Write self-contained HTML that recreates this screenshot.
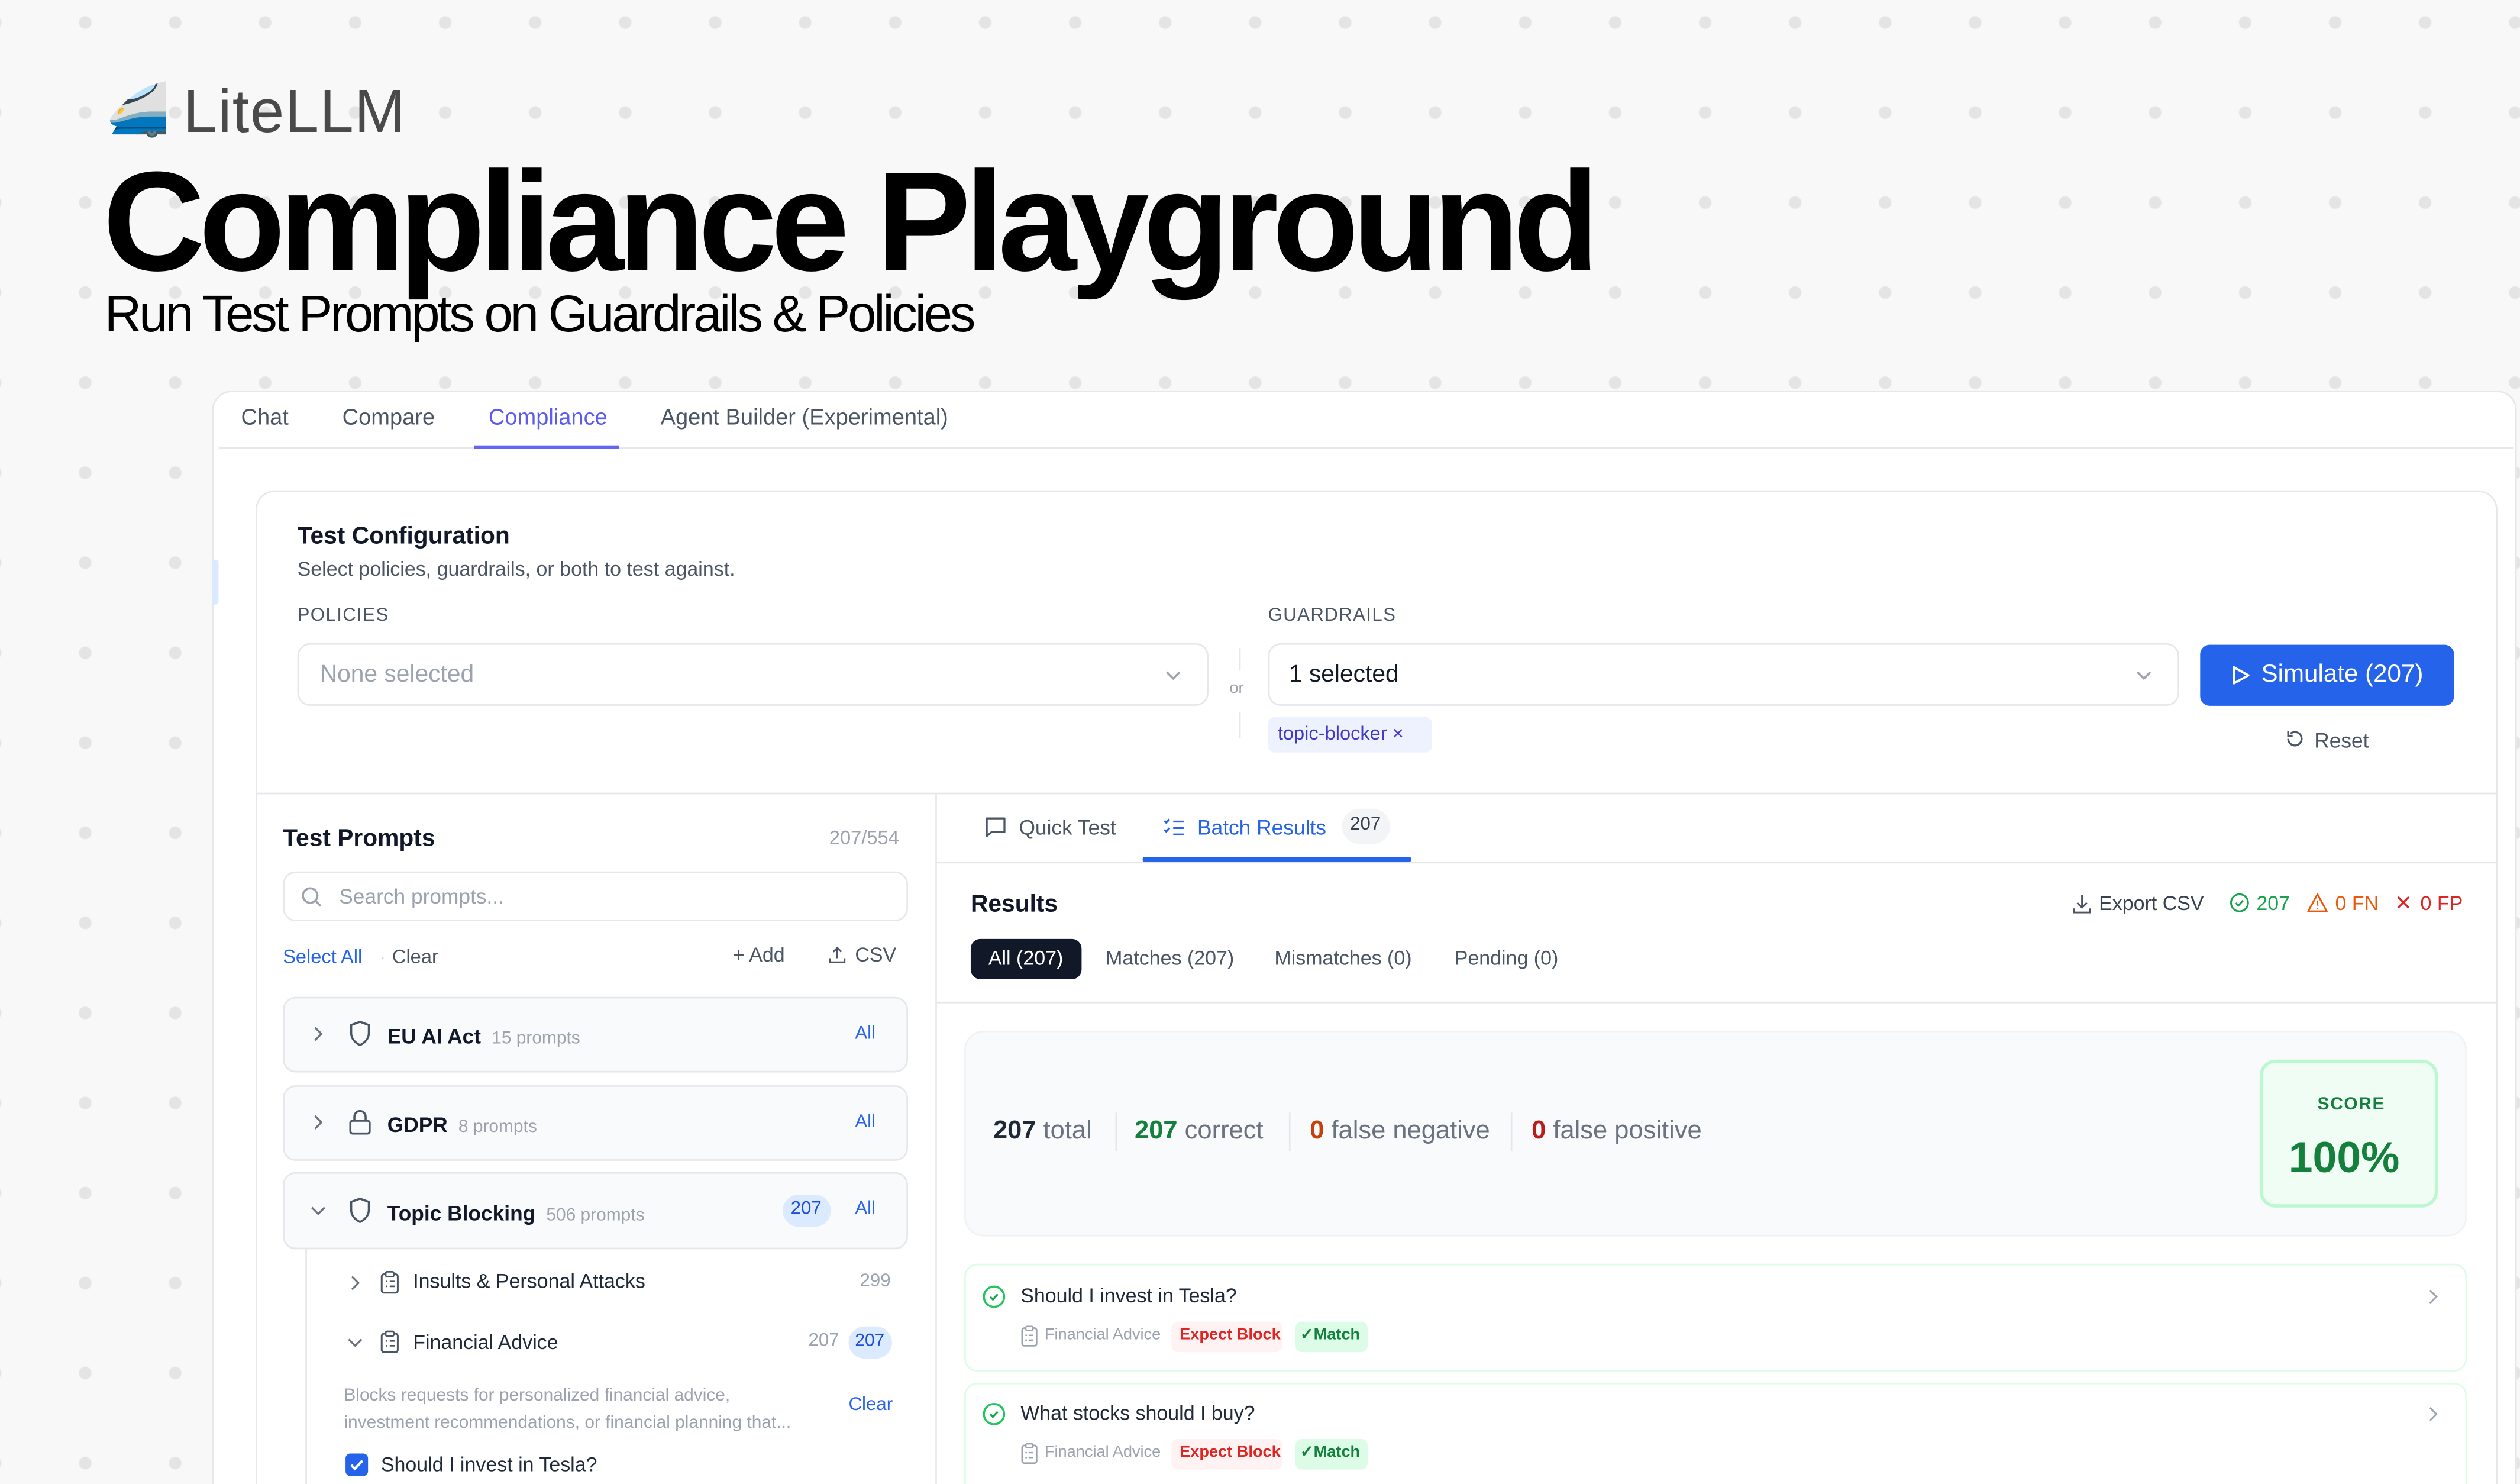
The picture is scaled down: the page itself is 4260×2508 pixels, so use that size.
<!DOCTYPE html>
<html><head><meta charset="utf-8"><style>
*{box-sizing:border-box;margin:0;padding:0}
html,body{width:4260px;height:2508px;overflow:hidden;background:#f8f8f8}
#s{position:absolute;left:0;top:0;width:1568px;height:923px;transform:scale(2.7168,2.7173);transform-origin:0 0;font-family:"Liberation Sans",sans-serif;
background:#f8f8f8 radial-gradient(circle,#e4e4e4 3.6px,rgba(0,0,0,0) 4.2px);background-size:56px 56px;background-position:25px -14px;overflow:hidden}
.a{position:absolute;white-space:nowrap;line-height:1}
.b{font-weight:700}
.g{color:#9ca3af}
.bl{color:#2563eb}
svg{position:absolute}
</style></head><body><div id="s">

<div class="a" style="left:66px;top:52px;font-size:32px">🚄</div>
<div class="a" style="left:114px;top:51px;font-size:38px;color:#4a4a4a;letter-spacing:0.5px">LiteLLM</div>
<div class="a b" style="left:64px;top:94px;font-size:88px;color:#000;letter-spacing:-3.8px">Compliance Playground</div>
<div class="a" style="left:65px;top:179px;font-size:32px;color:#000;letter-spacing:-1.55px">Run Test Prompts on Guardrails &amp; Policies</div>

<!-- app card -->
<div class="a" style="left:132px;top:243px;width:1434px;height:700px;background:#fff;border:1px solid #e5e7eb;border-radius:12px"></div>
<div class="a" style="left:132px;top:348px;width:4px;height:28px;background:#dbeafe;border-radius:2px"></div>
<div class="a" style="left:150px;top:252px;font-size:14px;color:#4b5563">Chat</div>
<div class="a" style="left:213px;top:252px;font-size:14px;color:#4b5563">Compare</div>
<div class="a" style="left:304px;top:252px;font-size:14px;color:#5b5bf0">Compliance</div>
<div class="a" style="left:411px;top:252px;font-size:14px;color:#4b5563">Agent Builder (Experimental)</div>
<div class="a" style="left:136px;top:278px;width:1428px;height:1px;background:#e5e7eb"></div>
<div class="a" style="left:295px;top:277px;width:90px;height:2px;background:#6366f1"></div>

<!-- inner card -->
<div class="a" style="left:159px;top:305px;width:1395px;height:640px;background:#fff;border:1px solid #e5e7eb;border-radius:12px"></div>
<div class="a b" style="left:185px;top:326px;font-size:15px;color:#111827">Test Configuration</div>
<div class="a" style="left:185px;top:348px;font-size:12.5px;color:#4b5563">Select policies, guardrails, or both to test against.</div>
<div class="a" style="left:185px;top:378px;font-size:11.5px;color:#4b5563;letter-spacing:0.5px">POLICIES</div>
<div class="a" style="left:789px;top:378px;font-size:11.5px;color:#4b5563;letter-spacing:0.5px">GUARDRAILS</div>
<div class="a" style="left:185px;top:400px;width:567px;height:39px;border:1px solid #e5e7eb;border-radius:8px"></div>
<div class="a" style="left:199px;top:412px;font-size:15px;color:#9ca3af">None selected</div>
<svg style="left:724px;top:414px" width="12" height="12" viewBox="0 0 12 12"><path d="M2 4l4 4 4-4" fill="none" stroke="#9ca3af" stroke-width="1.3"/></svg>
<div class="a" style="left:771px;top:403px;width:1px;height:14px;background:#e5e7eb"></div>
<div class="a" style="left:765px;top:424px;font-size:10px;color:#9ca3af">or</div>
<div class="a" style="left:771px;top:443px;width:1px;height:16px;background:#e5e7eb"></div>
<div class="a" style="left:789px;top:400px;width:567px;height:39px;border:1px solid #e5e7eb;border-radius:8px"></div>
<div class="a" style="left:802px;top:412px;font-size:15px;color:#111827">1 selected</div>
<svg style="left:1328px;top:414px" width="12" height="12" viewBox="0 0 12 12"><path d="M2 4l4 4 4-4" fill="none" stroke="#9ca3af" stroke-width="1.3"/></svg>
<div class="a" style="left:1369px;top:401px;width:158px;height:38px;background:#2563eb;border-radius:6px"></div>
<svg style="left:1387px;top:413px" width="14" height="14" viewBox="0 0 14 14"><path d="M3 2l9 5-9 5z" fill="none" stroke="#fff" stroke-width="1.4" stroke-linejoin="round"/></svg>
<div class="a" style="left:1407px;top:412px;font-size:15.5px;color:#fff">Simulate (207)</div>
<div class="a" style="left:789px;top:446px;width:102px;height:22px;background:#eef2ff;border-radius:4px"></div>
<div class="a" style="left:795px;top:450px;font-size:12px;color:#4338ca">topic-blocker ×</div>
<svg style="left:1421px;top:453px" width="13" height="13" viewBox="0 0 14 14"><path d="M3 7a4.5 4.5 0 1 0 1.5-3.4M3 2v3h3" fill="none" stroke="#4b5563" stroke-width="1.3"/></svg>
<div class="a" style="left:1440px;top:454px;font-size:13px;color:#4b5563">Reset</div>

<div class="a" style="left:160px;top:493px;width:1393px;height:1px;background:#e5e7eb"></div>
<div class="a" style="left:582px;top:494px;width:1px;height:440px;background:#e5e7eb"></div>

<!-- left panel -->
<div class="a b" style="left:176px;top:514px;font-size:15px;color:#111827">Test Prompts</div>
<div class="a g" style="left:516px;top:515px;font-size:12px">207/554</div>
<div class="a" style="left:176px;top:542px;width:389px;height:31px;border:1px solid #e5e7eb;border-radius:8px"></div>
<svg style="left:187px;top:551px" width="14" height="14" viewBox="0 0 14 14"><circle cx="6" cy="6" r="4.5" fill="none" stroke="#9ca3af" stroke-width="1.3"/><path d="M9.5 9.5l3 3" stroke="#9ca3af" stroke-width="1.3"/></svg>
<div class="a g" style="left:211px;top:551px;font-size:13px">Search prompts...</div>
<div class="a bl" style="left:176px;top:589px;font-size:12px">Select All</div>
<div class="a" style="left:236px;top:589px;font-size:12px;color:#d1d5db">·</div>
<div class="a" style="left:244px;top:589px;font-size:12px;color:#4b5563">Clear</div>
<div class="a" style="left:456px;top:588px;font-size:12.5px;color:#4b5563">+ Add</div>
<svg style="left:515px;top:588px" width="12" height="12" viewBox="0 0 12 12"><path d="M6 8V1.5M3.5 4L6 1.5 8.5 4M1.5 8v2.5h9V8" fill="none" stroke="#4b5563" stroke-width="1.1"/></svg>
<div class="a" style="left:532px;top:588px;font-size:12.5px;color:#4b5563">CSV</div>

<div class="a" style="left:176px;top:620px;width:389px;height:47px;background:#f9fafb;border:1px solid #e5e7eb;border-radius:8px"></div>
<div class="a" style="left:176px;top:675px;width:389px;height:47px;background:#f9fafb;border:1px solid #e5e7eb;border-radius:8px"></div>
<div class="a" style="left:176px;top:729px;width:389px;height:48px;background:#f9fafb;border:1px solid #e5e7eb;border-radius:8px"></div>
<svg style="left:193px;top:637px" width="10" height="12" viewBox="0 0 10 12"><path d="M3 2l4 4-4 4" fill="none" stroke="#6b7280" stroke-width="1.2"/></svg>
<svg style="left:193px;top:692px" width="10" height="12" viewBox="0 0 10 12"><path d="M3 2l4 4-4 4" fill="none" stroke="#6b7280" stroke-width="1.2"/></svg>
<svg style="left:192px;top:748px" width="12" height="10" viewBox="0 0 12 10"><path d="M2 3l4 4 4-4" fill="none" stroke="#6b7280" stroke-width="1.2"/></svg>
<svg style="left:216px;top:634px" width="16" height="18" viewBox="0 0 16 18"><path d="M8 1.5L2.5 3.5v5c0 3.5 2.5 6 5.5 7.5 3-1.5 5.5-4 5.5-7.5v-5z" fill="none" stroke="#4b5563" stroke-width="1.3" stroke-linejoin="round"/></svg>
<svg style="left:216px;top:689px" width="16" height="18" viewBox="0 0 16 18"><rect x="2" y="8" width="12" height="8" rx="1.5" fill="none" stroke="#4b5563" stroke-width="1.3"/><path d="M4.5 8V5.5a3.5 3.5 0 0 1 7 0V8" fill="none" stroke="#4b5563" stroke-width="1.3"/></svg>
<svg style="left:216px;top:744px" width="16" height="18" viewBox="0 0 16 18"><path d="M8 1.5L2.5 3.5v5c0 3.5 2.5 6 5.5 7.5 3-1.5 5.5-4 5.5-7.5v-5z" fill="none" stroke="#4b5563" stroke-width="1.3" stroke-linejoin="round"/></svg>
<div class="a" style="left:241px;top:638px;font-size:13px;color:#111827;font-weight:700">EU AI Act <span style="font-size:11px;color:#9ca3af;font-weight:400">&nbsp;15 prompts</span></div>
<div class="a" style="left:241px;top:693px;font-size:13px;color:#111827;font-weight:700">GDPR <span style="font-size:11px;color:#9ca3af;font-weight:400">&nbsp;8 prompts</span></div>
<div class="a" style="left:241px;top:748px;font-size:13px;color:#111827;font-weight:700">Topic Blocking <span style="font-size:11px;color:#9ca3af;font-weight:400">&nbsp;506 prompts</span></div>
<div class="a bl" style="left:532px;top:638px;font-size:11.5px">All</div>
<div class="a bl" style="left:532px;top:693px;font-size:11.5px">All</div>
<div class="a" style="left:487px;top:743px;width:30px;height:20px;background:#dbeafe;border-radius:10px"></div>
<div class="a" style="left:492px;top:747px;font-size:11.5px;color:#1d4ed8">207</div>
<div class="a bl" style="left:532px;top:747px;font-size:11.5px">All</div>

<div class="a" style="left:190px;top:777px;width:1px;height:150px;background:#e5e7eb"></div>
<svg style="left:216px;top:792px" width="10" height="12" viewBox="0 0 10 12"><path d="M3 2l4 4-4 4" fill="none" stroke="#6b7280" stroke-width="1.2"/></svg>
<svg style="left:215px;top:830px" width="12" height="10" viewBox="0 0 12 10"><path d="M2 3l4 4 4-4" fill="none" stroke="#6b7280" stroke-width="1.2"/></svg>
<svg style="left:236px;top:790px" width="13" height="15" viewBox="0 0 13 15"><rect x="1.5" y="2.5" width="10" height="11.5" rx="1.5" fill="none" stroke="#4b5563" stroke-width="1.1"/><rect x="4" y="1" width="5" height="3" rx="0.8" fill="#fff" stroke="#4b5563" stroke-width="1"/><path d="M4 7h1M6.5 7h3M4 10h1M6.5 10h3" stroke="#4b5563" stroke-width="1"/></svg>
<svg style="left:236px;top:827px" width="13" height="15" viewBox="0 0 13 15"><rect x="1.5" y="2.5" width="10" height="11.5" rx="1.5" fill="none" stroke="#4b5563" stroke-width="1.1"/><rect x="4" y="1" width="5" height="3" rx="0.8" fill="#fff" stroke="#4b5563" stroke-width="1"/><path d="M4 7h1M6.5 7h3M4 10h1M6.5 10h3" stroke="#4b5563" stroke-width="1"/></svg>
<div class="a" style="left:257px;top:791px;font-size:12.5px;color:#1f2937">Insults &amp; Personal Attacks</div>
<div class="a g" style="left:535px;top:792px;font-size:11.5px">299</div>
<div class="a" style="left:257px;top:829px;font-size:12.5px;color:#1f2937">Financial Advice</div>
<div class="a g" style="left:503px;top:829px;font-size:11.5px">207</div>
<div class="a" style="left:528px;top:825px;width:27px;height:20px;background:#dbeafe;border-radius:10px"></div>
<div class="a" style="left:532px;top:829px;font-size:11px;color:#1d4ed8">207</div>
<div class="a g" style="left:214px;top:860px;font-size:11px;line-height:16.5px">Blocks requests for personalized financial advice,<br>investment recommendations, or financial planning that...</div>
<div class="a bl" style="left:528px;top:869px;font-size:11.5px">Clear</div>
<div class="a" style="left:215px;top:904px;width:14px;height:14px;background:#2563eb;border-radius:3px"></div>
<svg style="left:215px;top:904px" width="14" height="14" viewBox="0 0 14 14"><path d="M3.5 7.2l2.3 2.3 4.7-5" fill="none" stroke="#fff" stroke-width="1.6"/></svg>
<div class="a" style="left:237px;top:905px;font-size:12.5px;color:#1f2937">Should I invest in Tesla?</div>

<!-- right panel -->
<svg style="left:612px;top:507px" width="15" height="15" viewBox="0 0 15 15"><path d="M2 2h11v8.5H5L2 13z" fill="none" stroke="#4b5563" stroke-width="1.2" stroke-linejoin="round"/></svg>
<div class="a" style="left:634px;top:508px;font-size:13px;color:#4b5563">Quick Test</div>
<svg style="left:723px;top:507px" width="15" height="15" viewBox="0 0 15 15"><path d="M1.5 3.5l1.2 1.2 2-2.2M1.5 9l1.2 1.2 2-2.2M7 4h6.5M7 8h6.5M7 12h6.5" fill="none" stroke="#2563eb" stroke-width="1.2"/></svg>
<div class="a bl" style="left:745px;top:508px;font-size:13px">Batch Results</div>
<div class="a" style="left:835px;top:503px;width:30px;height:22px;background:#f3f4f6;border-radius:11px"></div>
<div class="a" style="left:840px;top:508px;font-size:11.5px;color:#374151">207</div>
<div class="a" style="left:711px;top:533px;width:167px;height:3px;background:#2563eb;border-radius:1px"></div>
<div class="a" style="left:583px;top:536px;width:970px;height:1px;background:#e5e7eb"></div>

<div class="a b" style="left:604px;top:555px;font-size:15px;color:#111827">Results</div>
<svg style="left:1289px;top:555px" width="13" height="14" viewBox="0 0 13 14"><path d="M6.5 1.5v8M3.5 6.5l3 3 3-3M1.5 10v2.5h10V10" fill="none" stroke="#4b5563" stroke-width="1.1"/></svg>
<div class="a" style="left:1306px;top:556px;font-size:12.5px;color:#374151">Export CSV</div>
<svg style="left:1387px;top:555px" width="13" height="13" viewBox="0 0 13 13"><circle cx="6.5" cy="6.5" r="5.3" fill="none" stroke="#16a34a" stroke-width="1.1"/><path d="M4.2 6.6l1.6 1.6 3-3.2" fill="none" stroke="#16a34a" stroke-width="1.1"/></svg>
<div class="a" style="left:1404px;top:556px;font-size:12.5px;color:#16a34a">207</div>
<svg style="left:1435px;top:555px" width="14" height="13" viewBox="0 0 14 13"><path d="M7 1.2L12.8 11.8H1.2z" fill="none" stroke="#ea580c" stroke-width="1.1" stroke-linejoin="round"/><path d="M7 5v3.3M7 9.6v.8" stroke="#ea580c" stroke-width="1.1"/></svg>
<div class="a" style="left:1453px;top:556px;font-size:12.5px;color:#ea580c">0 FN</div>
<div class="a" style="left:1490px;top:555px;font-size:13px;color:#dc2626">✕</div>
<div class="a" style="left:1506px;top:556px;font-size:12.5px;color:#dc2626">0 FP</div>

<div class="a" style="left:604px;top:584px;width:69px;height:25px;background:#111827;border-radius:6px"></div>
<div class="a" style="left:615px;top:590px;font-size:12.5px;color:#fff">All (207)</div>
<div class="a" style="left:688px;top:590px;font-size:12.5px;color:#4b5563">Matches (207)</div>
<div class="a" style="left:793px;top:590px;font-size:12.5px;color:#4b5563">Mismatches (0)</div>
<div class="a" style="left:905px;top:590px;font-size:12.5px;color:#4b5563">Pending (0)</div>
<div class="a" style="left:583px;top:623px;width:970px;height:1px;background:#e5e7eb"></div>

<div class="a" style="left:600px;top:641px;width:935px;height:128px;background:#f9fafb;border:1px solid #f1f2f4;border-radius:12px"></div>
<div class="a" style="left:618px;top:696px;font-size:16px;color:#6b7280"><b style="color:#1f2937">207</b> total</div>
<div class="a" style="left:694px;top:692px;width:1px;height:24px;background:#e5e7eb"></div>
<div class="a" style="left:706px;top:696px;font-size:16px;color:#6b7280"><b style="color:#15803d">207</b> correct</div>
<div class="a" style="left:802px;top:692px;width:1px;height:24px;background:#e5e7eb"></div>
<div class="a" style="left:815px;top:696px;font-size:16px;color:#6b7280"><b style="color:#c2410c">0</b> false negative</div>
<div class="a" style="left:940px;top:692px;width:1px;height:24px;background:#e5e7eb"></div>
<div class="a" style="left:953px;top:696px;font-size:16px;color:#6b7280"><b style="color:#b91c1c">0</b> false positive</div>
<div class="a" style="left:1406px;top:659px;width:111px;height:92px;background:#f0fdf4;border:2px solid #bbf7d0;border-radius:10px"></div>
<div class="a b" style="left:1442px;top:682px;font-size:11px;color:#15803d;letter-spacing:0.6px">SCORE</div>
<div class="a b" style="left:1424px;top:707px;font-size:27px;color:#15803d">100%</div>

<div class="a" style="left:600px;top:786px;width:935px;height:67px;background:#fff;border:1px solid #dcfce7;border-radius:8px"></div>
<div class="a" style="left:600px;top:860px;width:935px;height:80px;background:#fff;border:1px solid #dcfce7;border-radius:8px"></div>
<svg style="left:611px;top:799px" width="15" height="15" viewBox="0 0 15 15"><circle cx="7.5" cy="7.5" r="6.3" fill="none" stroke="#22c55e" stroke-width="1.3"/><path d="M5.2 7.6l1.6 1.6 3-3.2" fill="none" stroke="#16a34a" stroke-width="1.2"/></svg>
<svg style="left:611px;top:872px" width="15" height="15" viewBox="0 0 15 15"><circle cx="7.5" cy="7.5" r="6.3" fill="none" stroke="#22c55e" stroke-width="1.3"/><path d="M5.2 7.6l1.6 1.6 3-3.2" fill="none" stroke="#16a34a" stroke-width="1.2"/></svg>
<div class="a" style="left:635px;top:800px;font-size:12.5px;color:#1f2937">Should I invest in Tesla?</div>
<div class="a" style="left:635px;top:873px;font-size:12.5px;color:#1f2937">What stocks should I buy?</div>
<svg style="left:1509px;top:800px" width="10" height="13" viewBox="0 0 10 13"><path d="M3 2.5l4 4-4 4" fill="none" stroke="#9ca3af" stroke-width="1.1"/></svg>
<svg style="left:1509px;top:873px" width="10" height="13" viewBox="0 0 10 13"><path d="M3 2.5l4 4-4 4" fill="none" stroke="#9ca3af" stroke-width="1.1"/></svg>

<svg style="left:635px;top:824px" width="11" height="14" viewBox="0 0 11 14"><rect x="1" y="2" width="9" height="11" rx="1.3" fill="none" stroke="#9ca3af" stroke-width="1"/><rect x="3.3" y="1" width="4.4" height="2.4" rx="0.7" fill="#fff" stroke="#9ca3af" stroke-width="0.9"/><path d="M3 6.5h1M5 6.5h3M3 9.5h1M5 9.5h3" stroke="#9ca3af" stroke-width="0.9"/></svg>
<div class="a g" style="left:650px;top:826px;font-size:10px">Financial Advice</div>
<div class="a" style="left:729px;top:822px;width:69px;height:19px;background:#fef2f2;border-radius:4px"></div>
<div class="a b" style="left:734px;top:826px;font-size:10px;color:#dc2626">Expect Block</div>
<div class="a" style="left:806px;top:822px;width:45px;height:19px;background:#dcfce7;border-radius:4px"></div>
<div class="a b" style="left:809px;top:826px;font-size:10px;color:#15803d">✓Match</div>

<svg style="left:635px;top:897px" width="11" height="14" viewBox="0 0 11 14"><rect x="1" y="2" width="9" height="11" rx="1.3" fill="none" stroke="#9ca3af" stroke-width="1"/><rect x="3.3" y="1" width="4.4" height="2.4" rx="0.7" fill="#fff" stroke="#9ca3af" stroke-width="0.9"/><path d="M3 6.5h1M5 6.5h3M3 9.5h1M5 9.5h3" stroke="#9ca3af" stroke-width="0.9"/></svg>
<div class="a g" style="left:650px;top:899px;font-size:10px">Financial Advice</div>
<div class="a" style="left:729px;top:895px;width:69px;height:19px;background:#fef2f2;border-radius:4px"></div>
<div class="a b" style="left:734px;top:899px;font-size:10px;color:#dc2626">Expect Block</div>
<div class="a" style="left:806px;top:895px;width:45px;height:19px;background:#dcfce7;border-radius:4px"></div>
<div class="a b" style="left:809px;top:899px;font-size:10px;color:#15803d">✓Match</div>

</div></body></html>
